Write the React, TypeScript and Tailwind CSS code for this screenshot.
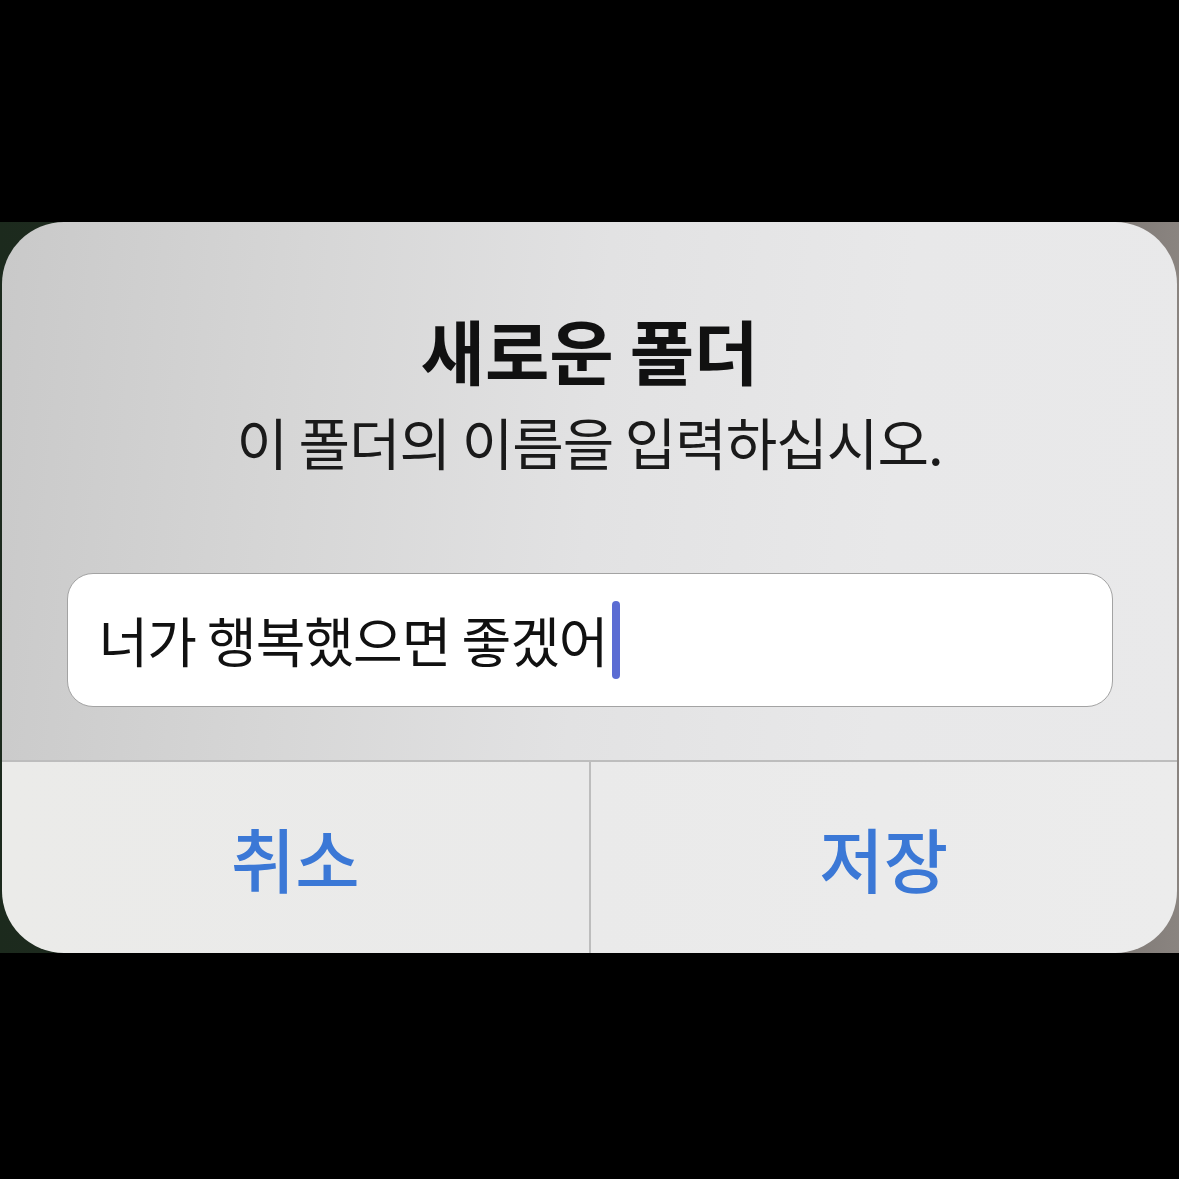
export default function App() {
  const font = { fontFamily: '"Noto Sans CJK KR", "Noto Sans", sans-serif' }

  return (
    <div className="flex h-[1179px] w-[1179px] flex-col bg-black" style={font}>
      <div className="h-[222px] shrink-0" />

      {/* screen content peeking behind the alert corners */}
      <div className="flex h-[731px] shrink-0 bg-[linear-gradient(90deg,#1c2a1d_0%,#2a2a28_50%,#8a8480_100%)] pl-[2px] pr-[2px]">
        <div className="flex flex-1 flex-col overflow-hidden rounded-[62px]">
          <div className="flex h-[538px] shrink-0 flex-col items-center bg-[linear-gradient(95deg,#c9c9c9_0%,#d6d6d6_25%,#e2e2e3_50%,#e8e8e9_75%,#e9e9ea_100%)] pt-[90px]">
            <h1 className="text-[70px] font-semibold leading-[76px] text-[#111111]">
              새로운 폴더
            </h1>
            <p className="mt-[22px] text-[56px] leading-[62px] tracking-[-1px] text-[#1a1a1a]">
              이 폴더의 이름을 입력하십시오.
            </p>

            <div className="mt-[101px] flex h-[134px] w-[1046px] items-center rounded-[26px] border-[1.5px] border-[#a3a3a3] bg-white pl-[31px]">
              <span className="text-[54px] leading-none tracking-[-1px] text-[#111111]">
                너가 행복했으면 좋겠어
              </span>
              <span className="ml-[4px] h-[78px] w-[8px] rounded-full bg-[#5b6cd3]" />
            </div>
          </div>

          <div className="flex flex-1 border-t-[2px] border-[#bdbdbd] bg-[linear-gradient(90deg,#ebebe9_0%,#eaeaea_50%,#ececec_100%)]">
            <button className="flex flex-1 items-center justify-center border-r-[2px] border-[#bdbdbd] text-[70px] font-medium text-[#3b78d6]">
              취소
            </button>
            <button className="flex flex-1 items-center justify-center text-[70px] font-medium text-[#3b78d6]">
              저장
            </button>
          </div>
        </div>
      </div>

      <div className="flex-1" />
    </div>
  )
}
